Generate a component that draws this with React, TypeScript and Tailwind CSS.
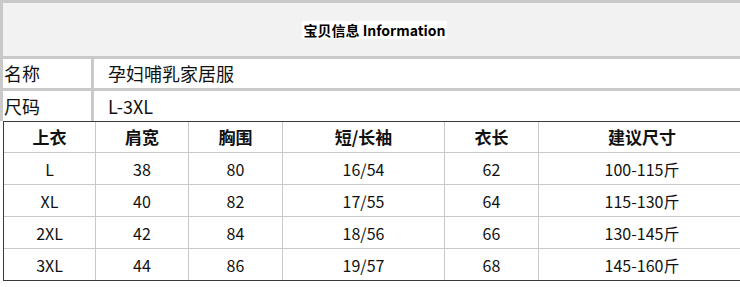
import React from 'react';

type SizeRow = {
  size: string;
  shoulder: string;
  chest: string;
  sleeve: string;
  length: string;
  weight: string;
};

const rows: SizeRow[] = [
  { size: 'L', shoulder: '38', chest: '80', sleeve: '16/54', length: '62', weight: '100-115斤' },
  { size: 'XL', shoulder: '40', chest: '82', sleeve: '17/55', length: '64', weight: '115-130斤' },
  { size: '2XL', shoulder: '42', chest: '84', sleeve: '18/56', length: '66', weight: '130-145斤' },
  { size: '3XL', shoulder: '44', chest: '86', sleeve: '19/57', length: '68', weight: '145-160斤' },
];

const font = "font-['Noto_Sans_CJK_SC','Noto_Sans',sans-serif]";

// column widths include the 1px right border
const cols = ['w-[92px]', 'w-[93px]', 'w-[94px]', 'w-[162px]', 'w-[94px]', 'w-[206px]'];

function Cell({ i, bold, children }: { i: number; bold?: boolean; children: React.ReactNode }) {
  return (
    <div
      className={`${cols[i]} shrink-0 flex items-center justify-center ${i < 5 ? 'border-r border-[#c9c9c9]' : ''} ${bold ? 'font-bold text-[17px]' : 'text-[16px]'} text-[#111]`}
    >
      {children}
    </div>
  );
}

export default function App() {
  const head = ['上衣', '肩宽', '胸围', '短/长袖', '衣长', '建议尺寸'];

  return (
    <div className={`w-[740px] h-[287px] overflow-hidden bg-white ${font}`}>
      <div className="border-t-[3px] border-l-[3px] border-[#c9c9c9] w-[760px]">
        <div className="h-[56px] bg-[#f2f2f2] border-b-[3px] border-[#c9c9c9] flex items-center">
          <div className="w-[743px] flex justify-center">
            <span className="bg-white px-[1px] text-[14px] font-bold text-black leading-[18px]">
              宝贝信息 Information
            </span>
          </div>
        </div>

        <div className="h-[32px] flex border-b-[3px] border-[#c9c9c9]">
          <div className="w-[91px] border-r-[3px] border-[#c9c9c9] flex items-center pl-[1px] text-[18px] text-[#111]">名称</div>
          <div className="flex items-center pl-[14px] text-[18px] text-[#111]">孕妇哺乳家居服</div>
        </div>

        <div className="h-[30px] flex">
          <div className="w-[91px] border-r-[3px] border-[#c9c9c9] flex items-center pl-[1px] text-[18px] text-[#111]">尺码</div>
          <div className="flex items-center pl-[14px] text-[18px] text-[#111]">L-3XL</div>
        </div>
      </div>

      <div className="ml-[3px] w-[760px] border-t border-b border-l border-[#3a3a3a]">
        <div className="h-[31px] flex border-b border-[#c9c9c9]">
          {head.map((h, i) => (
            <Cell key={h} i={i} bold>{h}</Cell>
          ))}
        </div>
        {rows.map((r, idx) => (
          <div
            key={r.size}
            className={`flex ${idx < rows.length - 1 ? 'h-[32px] border-b border-[#c9c9c9]' : 'h-[31px]'}`}
          >
            <Cell i={0}>{r.size}</Cell>
            <Cell i={1}>{r.shoulder}</Cell>
            <Cell i={2}>{r.chest}</Cell>
            <Cell i={3}>{r.sleeve}</Cell>
            <Cell i={4}>{r.length}</Cell>
            <Cell i={5}>{r.weight}</Cell>
          </div>
        ))}
      </div>
    </div>
  );
}
